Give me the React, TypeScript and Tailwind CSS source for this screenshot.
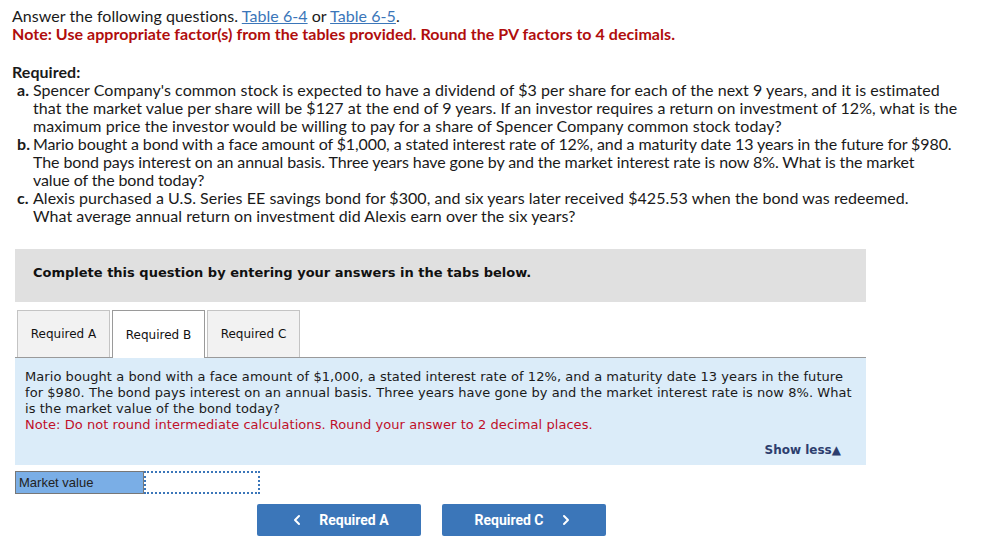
import { ChevronLeft, ChevronRight } from "lucide-react";

const TABS = ["Required A", "Required B", "Required C"];

export default function App() {
  const active = "Required B";

  return (
    <div className="min-h-[559px] w-[982px] bg-white text-[#1a1a1a]">
      <div className="px-3 pt-[7px] font-['Lato','Open_Sans',sans-serif] text-[16px] leading-[18px] tracking-[0.05px]">
        <p>
          Answer the following questions.{" "}
          <a className="text-[#3b76b9] underline">Table 6-4</a> or{" "}
          <a className="text-[#3b76b9] underline">Table 6-5</a>.
        </p>
        <p className="font-bold text-[#b00d0d]">
          Note: Use appropriate factor(s) from the tables provided. Round the PV factors to 4 decimals.
        </p>

        <p className="mt-[20px] font-bold">Required:</p>
        <ol className="whitespace-nowrap pl-[5px]">
          <li className="flex">
            <span className="w-4 shrink-0 font-bold">a.</span>
            <span>
              Spencer Company's common stock is expected to have a dividend of $3 per share for each of the next 9 years, and it is estimated
              <br />
              that the market value per share will be $127 at the end of 9 years. If an investor requires a return on investment of 12%, what is the
              <br />
              maximum price the investor would be willing to pay for a share of Spencer Company common stock today?
            </span>
          </li>
          <li className="flex">
            <span className="w-4 shrink-0 font-bold">b.</span>
            <span className="tracking-[-0.1px]">
              Mario bought a bond with a face amount of $1,000, a stated interest rate of 12%, and a maturity date 13 years in the future for $980.
              <br />
              The bond pays interest on an annual basis. Three years have gone by and the market interest rate is now 8%. What is the market
              <br />
              value of the bond today?
            </span>
          </li>
          <li className="flex">
            <span className="w-4 shrink-0 font-bold">c.</span>
            <span>
              Alexis purchased a U.S. Series EE savings bond for $300, and six years later received $425.53 when the bond was redeemed.
              <br />
              What average annual return on investment did Alexis earn over the six years?
            </span>
          </li>
        </ol>
      </div>

      <div className="ml-[15px] w-[851px] font-['DejaVu_Sans','Verdana',sans-serif] text-[13px]">
        <div className="mt-[24px] h-[53px] bg-[#e0e0e0] pl-[18px] pt-[14px] font-bold text-[#111]">
          Complete this question by entering your answers in the tabs below.
        </div>

        <div className="mt-[8px] flex gap-[2px] pl-[2px] text-[12px]">
          {TABS.map((t) => (
            <div
              key={t}
              className={
                t === active
                  ? "relative z-10 -mb-px flex h-[48px] w-[93px] items-center justify-center border border-b-0 border-[#9a9a9a] bg-white text-[#111]"
                  : "flex h-[47px] w-[93px] items-center justify-center border border-b-0 border-[#c4c4c4] bg-[#f2f2f2] text-[#111]"
              }
            >
              {t}
            </div>
          ))}
        </div>

        <div className="border-t border-[#9a9a9a] bg-[#dbecf9] pb-[7px] pl-[10px] pr-[4px] pt-[11px] leading-[16px]">
          <p className="whitespace-nowrap tracking-[0.06px] text-[#1a1a1a]">
            Mario bought a bond with a face amount of $1,000, a stated interest rate of 12%, and a maturity date 13 years in the future
            <br />
            for $980. The bond pays interest on an annual basis. Three years have gone by and the market interest rate is now 8%. What
            <br />
            is the market value of the bond today?
          </p>
          <p className="tracking-[0.06px] text-[#c0102a]">
            Note: Do not round intermediate calculations. Round your answer to 2 decimal places.
          </p>
          <div className="mt-[9px] flex justify-end pr-[21px]">
            <span className="text-[12px] font-bold text-[#2d3e6e]">Show less▲</span>
          </div>
        </div>

        <div className="mt-[6px] flex h-[23px]">
          <div className="flex w-[129px] items-center border border-[#777] bg-[#7aaee6] pl-[3px] font-['Liberation_Sans',Arial,sans-serif] text-[13px] text-[#222]">
            Market value
          </div>
          <div className="w-[116px] border-2 border-dotted border-[#3b76b9] bg-white"></div>
        </div>

        <div className="mt-[10px] flex gap-[21px] pl-[242px] font-['Roboto',sans-serif] text-[14px] font-bold text-white">
          <button className="flex h-[32px] w-[164px] items-center justify-center gap-[14px] rounded-[2px] bg-[#3b76b9]">
            <ChevronLeft size={16} strokeWidth={3} />
            Required A
          </button>
          <button className="flex h-[32px] w-[164px] items-center justify-center gap-[14px] rounded-[2px] bg-[#3b76b9]">
            Required C
            <ChevronRight size={16} strokeWidth={3} />
          </button>
        </div>
      </div>
    </div>
  );
}
